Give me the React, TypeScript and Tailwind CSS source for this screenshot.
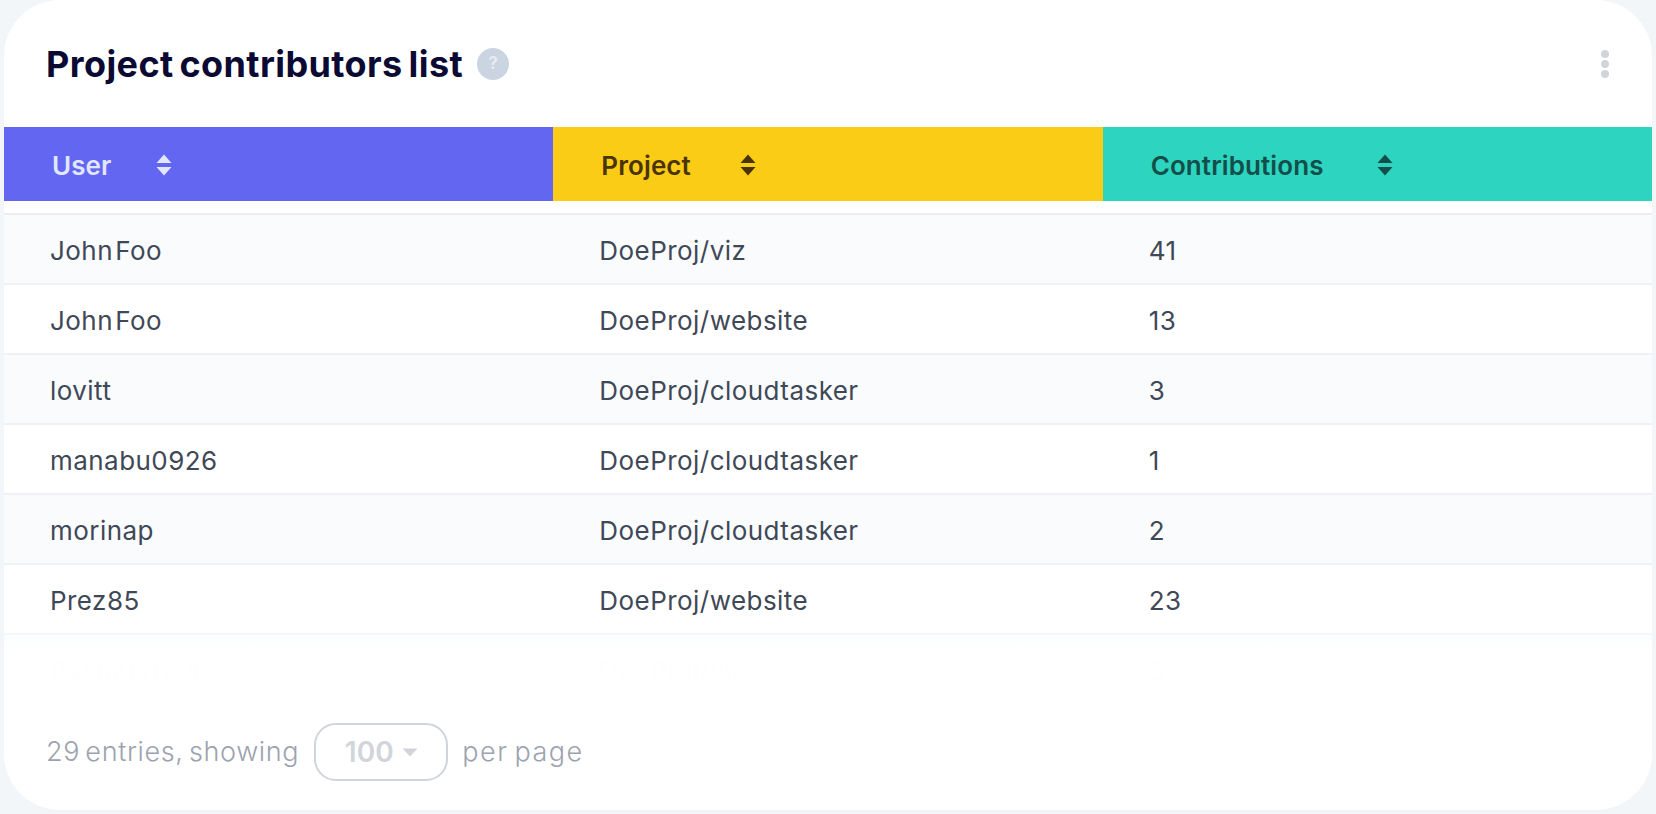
const columns = [
  { label: "User", bg: "bg-[#6366f1]", text: "text-[#e0e7ff]", sortGap: "ml-[44px]" },
  { label: "Project", bg: "bg-[#facc15]", text: "text-[#4a3305]", sortGap: "ml-[49px]" },
  { label: "Contributions", bg: "bg-[#2dd4bf]", text: "text-[#134e4a]", sortGap: "ml-[53px]" },
];

const rows = [
  ["John Foo", "DoeProj/viz", "41"],
  ["John Foo", "DoeProj/website", "13"],
  ["lovitt", "DoeProj/cloudtasker", "3"],
  ["manabu0926", "DoeProj/cloudtasker", "1"],
  ["morinap", "DoeProj/cloudtasker", "2"],
  ["Prez85", "DoeProj/website", "23"],
  ["Rasmus Hall", "DoeProj/viz", "5"],
];

const SortIcon = ({ className }: { className: string }) => (
  <svg className={className} width="16" height="22" viewBox="0 0 16 22" fill="currentColor">
    <path d="M8 0.5 L15.5 9 H0.5 Z" />
    <path d="M8 21.5 L15.5 13 H0.5 Z" />
  </svg>
);

export default function App() {
  return (
    <div
      className="h-[814px] w-full bg-[#f2f6f8] px-[4px] pb-[4px] overflow-hidden"
      style={{ fontFamily: '"Inter", "Noto Sans", sans-serif' }}
    >
      <div className="h-full flex flex-col bg-white rounded-[56px] overflow-hidden">
        <div className="h-[127px] shrink-0 flex items-center pl-[42px] pr-[43px]">
          <h1 className="text-[36px] font-bold text-[#0b0a33] tracking-[0.4px] [word-spacing:-3px]">
            Project contributors list
          </h1>
          <div className="ml-[14px] w-[32px] h-[32px] rounded-full bg-[#cbd5e1] text-[#e8edf3] text-[17px] font-semibold flex items-center justify-center">
            ?
          </div>
          <div className="ml-auto flex flex-col gap-[2px]">
            <span className="w-[8px] h-[8px] rounded-full bg-[#d1d5db]" />
            <span className="w-[8px] h-[8px] rounded-full bg-[#d1d5db]" />
            <span className="w-[8px] h-[8px] rounded-full bg-[#d1d5db]" />
          </div>
        </div>

        <div className="relative flex-1 min-h-0 overflow-hidden">
          <table className="w-full table-fixed border-collapse">
            <thead>
              <tr>
                {columns.map((col) => (
                  <th key={col.label} className={`${col.bg} ${col.text} h-[74px] pl-[48px] text-left p-0`}>
                    <div className="flex items-center pt-[2px]">
                      <span className="text-[26px] font-semibold tracking-[0.1px]">{col.label}</span>
                      <SortIcon className={col.sortGap} />
                    </div>
                  </th>
                ))}
              </tr>
              <tr>
                <td colSpan={3} className="h-[13px] p-0 border-b-2 border-[#eceef1]" />
              </tr>
            </thead>
            <tbody>
              {rows.map((row, i) => (
                <tr key={i} className={`h-[70px] border-b-2 border-[#eff1f4] ${i % 2 === 0 ? "bg-[#f9fbfd]" : "bg-white"}`}>
                  {row.map((cell, j) => (
                    <td key={j} className="pl-[46px] pt-[3px] text-[26px] text-[#3f4857] tracking-[0.45px] [word-spacing:-5.5px]">
                      {cell}
                    </td>
                  ))}
                </tr>
              ))}
            </tbody>
          </table>
          <div className="absolute left-0 right-0 bottom-0 h-[80px] bg-gradient-to-b from-white/0 via-white/99 via-[32%] to-white" />
        </div>

        <div className="h-[106px] shrink-0 flex items-start pl-[42px] pt-[19px] text-[27px] font-light text-[#9ca3af] tracking-[0.65px] [word-spacing:-3px]">
          <span className="leading-[58px]">29 entries, showing</span>
          <div className="ml-[15px] w-[134px] h-[58px] rounded-[22px] border-2 border-[#d1d5db] flex items-center justify-center gap-[8px] text-[28px] text-[#d1d5db] font-semibold tracking-normal">
            100
            <svg width="16" height="9" viewBox="0 0 16 9" fill="currentColor">
              <path d="M0.5 0.5 H15.5 L8 8.5 Z" />
            </svg>
          </div>
          <span className="ml-[14px] leading-[58px] tracking-[1.5px]">per page</span>
        </div>
      </div>
    </div>
  );
}
